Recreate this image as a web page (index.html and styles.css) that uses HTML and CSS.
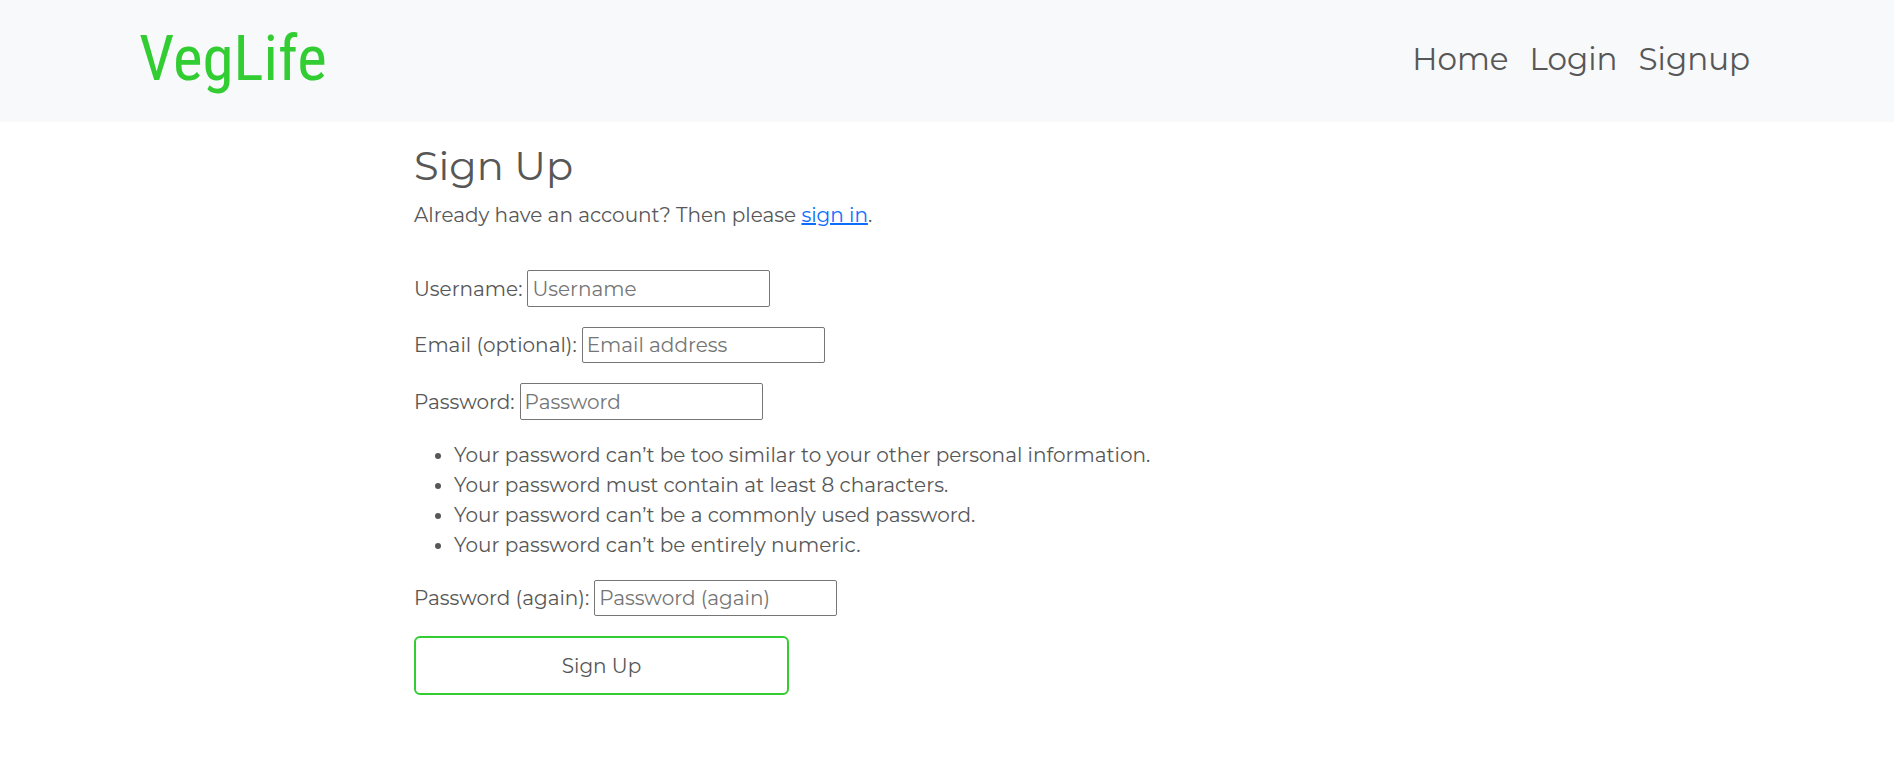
FILE: index.html
```html
<!DOCTYPE html>
<html lang="en">
<head>
  <meta charset="utf-8">
  <meta name="viewport" content="width=device-width, initial-scale=1">
  <title>VegLife</title>
  <link rel="stylesheet" href="styles.css">
</head>
<body>
  <header class="site-header">
    <a class="brand" href="#">VegLife</a>
    <nav class="site-nav">
      <a href="#">Home</a>
      <a href="#">Login</a>
      <a href="#">Signup</a>
    </nav>
  </header>
  <main class="content">
    <h1 class="title">Sign Up</h1>
    <p class="intro">Already have an account? Then please <a href="#">sign in</a>.</p>
    <form class="signup">
      <div class="field">
        <label for="username">Username:</label>
        <input id="username" type="text" placeholder="Username">
      </div>
      <div class="field">
        <label for="email">Email (optional):</label>
        <input id="email" type="email" placeholder="Email address">
      </div>
      <div class="field">
        <label for="password1">Password:</label>
        <input id="password1" type="password" placeholder="Password">
      </div>
      <ul class="hints">
        <li>Your password can’t be too similar to your other personal information.</li>
        <li>Your password must contain at least 8 characters.</li>
        <li>Your password can’t be a commonly used password.</li>
        <li>Your password can’t be entirely numeric.</li>
      </ul>
      <div class="field">
        <label for="password2">Password (again):</label>
        <input id="password2" type="password" placeholder="Password (again)">
      </div>
      <button class="submit" type="submit">Sign Up</button>
    </form>
  </main>
</body>
</html>
```
FILE: styles.css
```css
* {
  box-sizing: border-box;
}

body {
  margin: 0;
  background: #fff;
  color: #575757;
  font-family: Montserrat, Inter, sans-serif;
  font-size: 20px;
  font-weight: 400;
  line-height: 30px;
}

.site-header {
  display: flex;
  align-items: center;
  justify-content: space-between;
  padding: 11px 144px 15px 139px;
  background: #f8f9fb;
}

.brand {
  color: #32cd32;
  font-family: "Roboto Condensed", "Liberation Sans Narrow", Roboto, sans-serif;
  font-size: 63px;
  font-weight: 400;
  line-height: 96px;
  text-decoration: none;
}

.site-nav {
  display: flex;
  gap: 21px;
  font-size: 31px;
  line-height: 48px;
}

.site-nav a {
  color: inherit;
  text-decoration: none;
}

.content {
  max-width: 1066px;
  margin: 0 auto;
  padding: 20px 0;
}

.title {
  margin: 0 0 10px;
  font-size: 40px;
  font-weight: 400;
  line-height: 48px;
}

.intro {
  margin: 0 0 40px;
}

.intro a {
  color: #0d6efd;
}

.signup {
  display: flex;
  flex-direction: column;
  gap: 20px;
}

.field {
  display: flex;
  align-items: center;
  gap: 5px;
}

.field input {
  width: 243px;
  height: 36px;
  padding: 1px 4px;
  border: 1px solid #767676;
  border-radius: 2px;
  background: #fff;
  color: inherit;
  font: inherit;
}

#username,
#password1 {
  height: 37px;
}

.field input::placeholder {
  color: #757575;
}

.hints {
  margin: 0;
  padding-left: 40px;
}

.submit {
  width: 375px;
  height: 59px;
  border: 2px solid #32cd32;
  border-radius: 6px;
  background: #fff;
  color: inherit;
  font: inherit;
}
```
